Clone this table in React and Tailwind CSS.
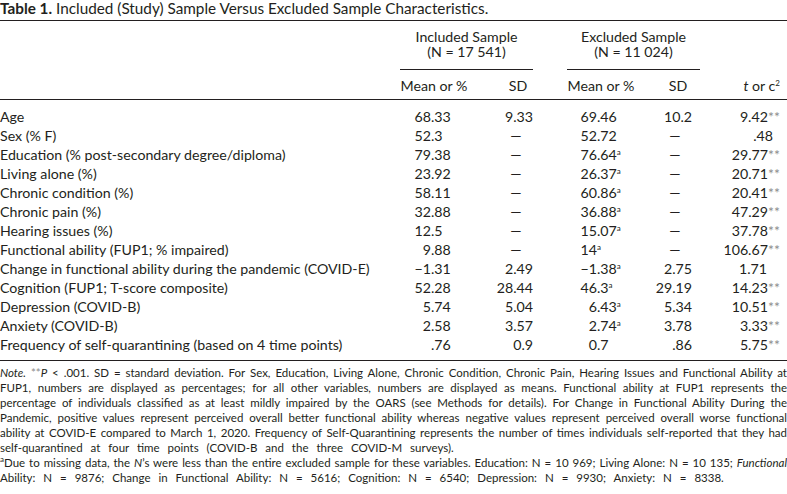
import React from "react"

const rows = [
    ["Age", "68.33", "9.33", "69.46", "10.2", "9.42", 7],
    ["Sex (% F)", "52.3", "—", "52.72", "—", ".48", 14],
    ["Education (% post-secondary degree/diploma)", "79.38", "—", "76.64a", "—", "29.77", 7],
    ["Living alone (%)", "23.92", "—", "26.37a", "—", "20.71", 7],
    ["Chronic condition (%)", "58.11", "—", "60.86a", "—", "20.41", 7],
    ["Chronic pain (%)", "32.88", "—", "36.88a", "—", "47.29", 7],
    ["Hearing issues (%)", "12.5", "—", "15.07a", "—", "37.78", 7],
    ["Functional ability (FUP1; % impaired)", "9.88", "—", "14a", "—", "106.67", 7],
    ["Change in functional ability during the pandemic (COVID-E)", "−1.31", "2.49", "−1.38a", "2.75", "1.71", 20],
    ["Cognition (FUP1; T-score composite)", "52.28", "28.44", "46.3a", "29.19", "14.23", 7],
    ["Depression (COVID-B)", "5.74", "5.04", "6.43a", "5.34", "10.51", 7],
    ["Anxiety (COVID-B)", "2.58", "3.57", "2.74a", "3.78", "3.33", 7],
    ["Frequency of self-quarantining (based on 4 time points)", ".76", "0.9", "0.7", ".86", "5.75", 7],
]

const Sup = ({ children }) => (
    <span className="relative -top-[5px] text-[8px] leading-none">{children}</span>
)

const Stars = () => <span className="text-[#8c8c8c]">**</span>

// split "76.64a" into int / fraction / footnote so decimal points line up
const split = (v) => v.match(/^([^.a]*)(\.[0-9]+)?(a)?$/)

const InclMean = ({ v }) => {
    const m = split(v)
    return (
        <div className="grid grid-cols-[39px_45px]">
            <div className="text-right">{m[1]}</div>
            <div>{m[2]}</div>
        </div>
    )
}

const ExclMean = ({ v }) => {
    const m = split(v)
    return (
        <div className="grid grid-cols-[37px_45px]">
            <div className="text-right">{m[1]}</div>
            <div>{m[2]}{m[3] && <Sup>{m[3]}</Sup>}</div>
        </div>
    )
}

const NoteLine = ({ children, last, extra = "" }) => (
    <div className={`${last ? "" : "text-justify [text-align-last:justify]"} ${extra}`}>{children}</div>
)

export default function App() {
    return (
        <div className="w-[787px] h-[494px] bg-white text-[#231f20] font-[family-name:Lato,sans-serif] overflow-hidden">
            <div className="text-[15.3px] leading-[17px]">
                <span className="font-bold">Table 1.</span> Included (Study) Sample Versus Excluded Sample Characteristics.
            </div>

            {/* header */}
            <div className="mt-[3px] border-t border-[#231f20] border-b grid grid-cols-[392px_84px_84px_82px_72px_73px] text-[14.2px]">
                <div className="col-start-2 col-span-2 ml-[8px] mr-[27px] pt-[8px] text-center leading-[15px]">
                    <div>Included Sample</div>
                    <div>(N = 17 541)</div>
                    <div className="mt-[10px] border-t border-[#231f20]"></div>
                </div>
                <div className="col-span-2 ml-[7px] mr-[14px] pt-[8px] text-center leading-[15px]">
                    <div>Excluded Sample</div>
                    <div>(N = 11 024)</div>
                    <div className="mt-[10px] border-t border-[#231f20]"></div>
                </div>
                <div></div>

                <div className="col-start-2 text-center pt-[8px] pb-[5px] leading-[16px]">Mean or %</div>
                <div className="text-center pt-[8px] pb-[5px] leading-[16px]">SD</div>
                <div className="text-center pt-[8px] pb-[5px] leading-[16px]">Mean or %</div>
                <div className="text-center pt-[8px] pb-[5px] leading-[16px]">SD</div>
                <div className="text-right pr-[7px] pt-[8px] pb-[5px] leading-[16px]">
                    <i>t</i> or c<Sup>2</Sup>
                </div>
            </div>

            {/* body */}
            <div className="pt-[7px] pb-[6px] border-b border-[#231f20] grid grid-cols-[392px_84px_84px_82px_72px_73px] text-[14.2px] leading-[19px]">
                {rows.map((r) => (
                    <React.Fragment key={r[0]}>
                        <div className="whitespace-nowrap">{r[0]}</div>
                        <InclMean v={r[1]} />
                        {r[2] === "—"
                            ? <div className="flex justify-center pr-[4px]">—</div>
                            : <div className="text-right pr-[27px]">{r[2]}</div>}
                        <ExclMean v={r[3]} />
                        {r[4] === "—"
                            ? <div className="flex justify-center pr-[6px]">—</div>
                            : <div className="text-right pr-[22px]">{r[4]}</div>}
                        <div className="text-right" style={{ paddingRight: r[6] }}>
                            {r[5]}{r[6] === 7 && <Stars />}
                        </div>
                    </React.Fragment>
                ))}
            </div>

            {/* notes */}
            <div className="mt-[4px] text-[11.5px] leading-[15px]">
                <NoteLine>
                    <i>Note.</i> <Stars /><i>P</i> &lt; .001. SD = standard deviation. For Sex, Education, Living Alone, Chronic Condition, Chronic Pain, Hearing Issues and Functional Ability at
                </NoteLine>
                <NoteLine>
                    FUP1, numbers are displayed as percentages; for all other variables, numbers are displayed as means. Functional ability at FUP1 represents the
                </NoteLine>
                <NoteLine>
                    percentage of individuals classified as at least mildly impaired by the OARS (see Methods for details). For Change in Functional Ability During the
                </NoteLine>
                <NoteLine>
                    Pandemic, positive values represent perceived overall better functional ability whereas negative values represent perceived overall worse functional
                </NoteLine>
                <NoteLine>
                    ability at COVID-E compared to March 1, 2020. Frequency of Self-Quarantining represents the number of times individuals self-reported that they had
                </NoteLine>
                <NoteLine last extra="[word-spacing:5px]">
                    self-quarantined at four time points (COVID-B and the three COVID-M surveys).
                </NoteLine>
                <NoteLine>
                    <Sup>a</Sup>Due to missing data, the <i>N</i>’s were less than the entire excluded sample for these variables. Education: N = 10 969; Living Alone: N = 10 135; <i>Functional</i>
                </NoteLine>
                <NoteLine last extra="[word-spacing:5px]">
                    Ability: N = 9876; Change in Functional Ability: N = 5616; Cognition: N = 6540; Depression: N = 9930; Anxiety: N = 8338.
                </NoteLine>
            </div>
        </div>
    )
}
